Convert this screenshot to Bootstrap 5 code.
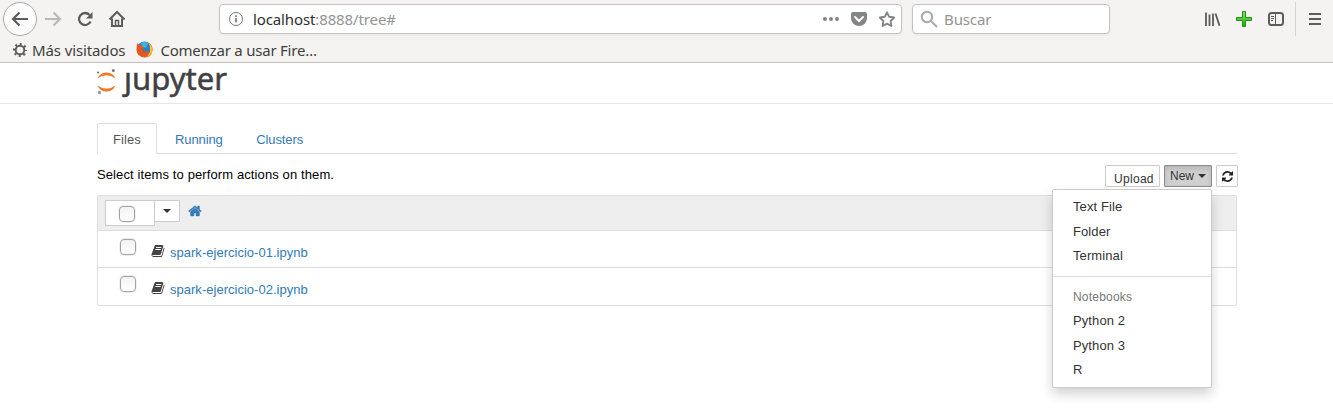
<!DOCTYPE html>
<html lang="es">
<head>
<meta charset="utf-8">
<title>Home</title>
<link href="https://cdn.jsdelivr.net/npm/bootstrap@5.3.0/dist/css/bootstrap.min.css" rel="stylesheet">
<style>
body{font:13px/18.57px "Liberation Sans",Arial,sans-serif;color:#000;background:#fff;min-height:100vh}
svg{display:block;flex:none}
.chrome{height:63px;background:#f4f3f1;border-bottom:1px solid #c3c1be;font:15px/20px "Noto Sans",sans-serif;letter-spacing:-.12px;color:#3f3f3f}
.toolbar-row{height:38px}
.field{height:30px;background:#fff;border:1px solid #c6c4c1;border-radius:4px;box-shadow:0 1px 3px #0000000d}
.address{width:683px;margin-left:93px;padding-left:9px;padding-right:6px}
.address .host{color:#2e2e2e}
.address .rest{color:#949494}
.searchbox{width:198px;margin-left:10px;padding-left:7px;color:#949494}
.bookmarks{height:23px;padding-left:12px}
.toolsep{width:1px;height:34px;background:#d5d3d0}
.logo-bar{height:41px;border-bottom:1px solid #e7e7e7}
.page{width:1141px;margin-left:97px}
.nav-tabs{margin-top:19px;height:31px;--bs-nav-tabs-border-color:#ddd;width:1140px}
.nav-tabs .nav-link{padding:6px 15px 5px;height:31px;line-height:20px;color:#337ab7;border-radius:2px 2px 0 0;margin-right:1.500px;letter-spacing:-.1px}
.nav-tabs .nav-link.active{color:#555;border-color:#ddd #ddd #fff;width:60px;margin-right:2px;letter-spacing:.1px}
.actions{height:41px;padding-top:11px}
.hint{margin-top:1px;letter-spacing:.11px}
.tool{height:22px;border:1px solid #ccc;border-radius:1px;background:#fff;color:#333;font-size:12px;line-height:18px;padding:0}
.upload{width:55px;padding:5px 0 0 8px;height:22px;line-height:16px;letter-spacing:.3px;white-space:nowrap}
.newbtn{width:48px;background:#d0d0d0;border-color:#8c8c8c;box-shadow:inset 0 3px 5px #00000020}
.caret{border:4px solid transparent;border-top-color:currentColor;border-bottom:0}
.menu{top:24px;right:0;left:auto;width:160px;padding:5px 0 4px;margin:0;font-size:13px;border:1px solid #ccc;border-radius:2px;box-shadow:0 6px 12px #0000002d}
.menu .dropdown-item{padding:3px 20px;line-height:18.5px;color:#333;letter-spacing:.1px}
.menu .dropdown-divider{margin:7.500px 0 9px;border-color:#e0e0e0;opacity:1}
.menu .dropdown-header{padding:3px 20px;font-size:12px;line-height:17.14px;color:#777;letter-spacing:.2px}
.listing{width:1140px;border:1px solid #ddd;border-radius:2px}
.list-head{height:34px;background:#eee;padding:4px 7px}
.selector{width:50px;height:26px;border:1px solid #ccc;background:#fff;padding:5px 0 0 13px}
.dropper{width:26px;height:22px;border:1px solid #ccc;background:#fff;color:#333;margin-left:-1px}
.tick{appearance:none;display:block;width:16px;height:16px;margin:0;border:1px solid #a2a2a2;border-radius:4px;background:linear-gradient(#f2f2f2,#fff);box-shadow:0 0 0 .4px #ddd}
.item-row{height:37px;border-top:1px solid #ddd;padding-left:22px}
.item-row + .item-row{height:38px}
.item-row a{color:#337ab7;text-decoration:none;margin:13px 0 0 4px;letter-spacing:.02px}
</style>
</head>
<body>
<header class="chrome">
  <div class="toolbar-row d-flex align-items-center">
    <svg width="126" height="38" fill="none" stroke="#5c5c5c" stroke-width="2">
      <circle cx="20" cy="19" r="16.5" fill="#fcfcfc" stroke="#aaa" stroke-width="1"/>
      <path d="M13 19H28M19.500 12.500L13 19l6.500 6.500" stroke-width="2.200"/>
      <path d="M45 19H60M53.500 12.500L60 19l-6.500 6.500" stroke="#b9b9b9" stroke-width="2.200"/>
      <path d="M90.500 21.500A6 6 0 1 1 89.500 15" stroke-width="2.300"/><path d="M92.500 12v6.500H86z" fill="#5c5c5c" stroke="none"/>
      <path d="M109.500 19.500L117 12l7.500 7.500M112 18.500V26h10v-7.500"/><path d="M115.500 26v-5.500h3V26" stroke-width="1.500"/>
    </svg>
    <div class="field address d-flex align-items-center">
      <svg width="16" height="16" fill="none" stroke="#777"><circle cx="7" cy="8" r="6.500"/><path d="M7 7v4.500M7 4.300v1.600" stroke-width="1.600"/></svg>
      <span style="margin-left:8px"><span class="host">localhost</span><span class="rest">:8888/tree#</span></span>
      <svg class="ms-auto" width="73" height="18" fill="#858585">
        <circle cx="3" cy="9" r="2"/><circle cx="9" cy="9" r="2"/><circle cx="15" cy="9" r="2"/>
        <path d="M31 2h12q2 0 2 2v4a8 8 0 0 1-16 0V4q0-2 2-2z"/><path d="M33 7l4 4 4-4" fill="none" stroke="#fff" stroke-width="2" stroke-linecap="round"/>
        <path d="M65 2.300l2.200 4.500 5 .7-3.600 3.500.8 5-4.400-2.400-4.400 2.400.8-5-3.600-3.500 5-.7z" fill="none" stroke="#858585" stroke-width="1.900" stroke-linejoin="round"/>
      </svg>
    </div>
    <div class="field searchbox d-flex align-items-center">
      <svg width="18" height="18" fill="none" stroke="#aaa" stroke-width="2"><circle cx="7" cy="7" r="5.200"/><path d="M11 11l6 6"/></svg>
      <span style="margin-left:6px">Buscar</span>
    </div>
    <svg width="80" height="18" style="margin-left:95px">
      <path d="M1 2.500V16M4.500 4.500V16M8 3.500V16M10.500 3.500l4 12.300" stroke="#5c5c5c" stroke-width="1.800" fill="none"/>
      <defs><linearGradient id="g" x2="0" y2="1"><stop stop-color="#84e563"/><stop offset="1" stop-color="#22a80f"/></linearGradient></defs>
      <path d="M37.500 1.500h3v6h6v3h-6v6h-3v-6h-6v-3h6z" fill="url(#g)" stroke="#229216"/>
      <rect x="64" y="3" width="14" height="12" rx="2.500" fill="none" stroke="#5c5c5c" stroke-width="2"/><path d="M70.500 3v12" stroke="#5c5c5c"/><path d="M66 6.500h3M66 8.500h3M66 10.500h2" stroke="#5c5c5c"/>
    </svg>
    <div class="toolsep" style="margin-left:10px"></div>
    <svg width="12" height="14" style="margin-left:13px" stroke="#5c5c5c" stroke-width="2"><path d="M0 2h12M0 7h12M0 12h12"/></svg>
  </div>
  <div class="bookmarks d-flex align-items-center">
    <svg width="16" height="16" fill="none" stroke="#5c5c5c"><circle cx="8" cy="8" r="4.300" stroke-width="1.900"/><circle cx="8" cy="8" r="6" stroke-width="2.200" stroke-dasharray="2 2.712" stroke-dashoffset="1"/></svg>
    <span style="margin-left:4px">Más visitados</span>
    <svg width="17" height="17" viewBox="0 0 17 17" style="margin-left:11px">
      <circle cx="8.500" cy="8" r="7.500" fill="#2584c7"/><path d="M5 2q4-2 7 0l-2 5-4-1z" fill="#3db4e8"/>
      <path d="M1.500 2q1 1.500 2.500 1.500l2 2 2.500.5q0 1.500-2 2 0 3 3.500 2.500 2-.8 3-.3-1 2-3 2.300 5-.5 4-6.500 0-3-2.500-4.500 5.500 2 5 8Q15.500 16.500 8.500 16.500 1 16 .5 9 .2 5 1.500 2z" fill="#e4571c"/>
      <path d="M12.500 2q4 3 3.800 7-.5 6-6.300 7 5-3.500 4-8 0-3.500-1.500-6z" fill="#fbc02d"/>
    </svg>
    <span style="margin-left:7px;letter-spacing:-.22px">Comenzar a usar Fire…</span>
  </div>
</header>
<div class="logo-bar">
  <svg width="240" height="40" role="img">
    <text x="124" y="26.500" font-family="Noto Sans,sans-serif" font-size="31.500" fill="#414042" stroke="#414042" stroke-width=".5" textLength="103" lengthAdjust="spacingAndGlyphs">jupyter</text>
    <path d="M119 0h13v9h-13z" fill="#fff"/>
    <path d="M97.500 15.500a9.700 9.700 0 0 1 18 0q-9-6.500-18 0zM97.500 22.500a9.700 9.700 0 0 0 18 0q-9 6.500-18 0z" fill="#f37726"/>
    <circle cx="98" cy="9.500" r="1" fill="#616262"/><circle cx="113.300" cy="7.500" r="1.500" fill="#767677"/><circle cx="99.500" cy="29.500" r="1.700" fill="#989798"/>
  </svg>
</div>
<main class="page">
  <ul class="nav nav-tabs">
    <li class="nav-item"><a class="nav-link active" href="#">Files</a></li>
    <li class="nav-item"><a class="nav-link" href="#">Running</a></li>
    <li class="nav-item"><a class="nav-link" href="#">Clusters</a></li>
  </ul>
  <div class="actions d-flex align-items-start">
    <span class="hint">Select items to perform actions on them.</span>
    <div class="ms-auto d-flex" style="gap:4px">
      <div class="tool upload">Upload</div>
      <div class="position-relative">
        <button class="tool newbtn d-flex align-items-center justify-content-center">New<span class="caret" style="margin-left:4px"></span></button>
        <ul class="dropdown-menu menu show">
          <li><a class="dropdown-item" href="#">Text File</a></li>
          <li><a class="dropdown-item" href="#">Folder</a></li>
          <li><a class="dropdown-item" href="#">Terminal</a></li>
          <li><hr class="dropdown-divider"></li>
          <li class="dropdown-header">Notebooks</li>
          <li><a class="dropdown-item" href="#">Python 2</a></li>
          <li><a class="dropdown-item" href="#">Python 3</a></li>
          <li><a class="dropdown-item" href="#">R</a></li>
        </ul>
      </div>
      <button class="tool d-flex align-items-center justify-content-center" style="width:22px" aria-label="Refresh">
        <svg width="11" height="11" viewBox="128 128 1536 1536" fill="#222"><path d="M1639 1056q0 5-1 7-64 268-268 434.500t-478 166.500q-146 0-282.500-55t-243.500-157l-129 129q-19 19-45 19t-45-19-19-45v-448q0-26 19-45t45-19h448q26 0 45 19t19 45-19 45l-137 137q71 66 161 102t187 36q134 0 250-65t186-179q11-17 53-117 8-23 30-23h192q13 0 22.500 9.500t9.500 22.500zm25-800v448q0 26-19 45t-45 19h-448q-26 0-45-19t-19-45 19-45l138-138q-148-137-349-137-134 0-250 65t-186 179q-11 17-53 117-8 23-30 23h-199q-13 0-22.500-9.500t-9.500-22.500v-7q65-268 270-434.500t480-166.500q146 0 284 55.500t245 156.500l130-129q19-19 45-19t45 19 19 45z"/></svg>
      </button>
    </div>
  </div>
  <section class="listing">
    <div class="list-head d-flex align-items-start">
      <div class="selector"><input type="checkbox" class="tick" aria-label="Select all"></div>
      <div class="dropper d-flex align-items-center justify-content-center"><span class="caret"></span></div>
      <svg width="14" height="14" viewBox="0 0 1792 1792" fill="#337ab7" stroke="#337ab7" stroke-width="50" style="margin:4px 0 0 8px"><path d="M1472 992v480q0 26-19 45t-45 19h-384v-384h-256v384h-384q-26 0-45-19t-19-45v-480q0-1 .5-3t.5-3l575-474 575 474q1 2 1 6zm223-69l-62 74q-8 9-21 11h-3q-13 0-21-7l-692-577-692 577q-12 8-24 7-13-2-21-11l-62-74q-8-10-7-23.500t11-21.500l719-599q32-26 76-26t76 26l244 204v-195q0-14 9-23t23-9h192q14 0 23 9t9 23v408l219 182q10 8 11 21.500t-7 23.500z"/></svg>
    </div>
    <svg width="0" height="0" class="d-none"><symbol id="book" viewBox="0 0 1792 1792"><path d="M1639 478q40 57 18 129l-275 906q-19 64-76.500 107.500t-122.500 43.500h-923q-77 0-148.500-53.500t-99.500-131.500q-24-67-2-127 0-4 3-27t4-37q1-8-3-21.500t-3-19.500q2-11 8-21t16.500-23.500 16.500-23.500q23-38 45-91.500t30-91.500q3-10 .5-30t-.5-28q3-11 17-28t17-23q21-36 42-92t25-90q1-9-2.500-32t.5-28q4-13 22-30.500t22-22.500q19-26 42.500-84.500t27.500-96.500q1-8-3-25.500t-2-26.500q2-8 9-18t18-23 17-21q8-12 16.500-30.500t15-35 16-36 19.500-32 26.500-23.500 36-11.500 47.500 5.500l-1 3q38-9 51-9h761q74 0 114 56t18 130l-274 906q-36 119-71.500 153.500t-128.500 34.500h-869q-27 0-38 15-11 16-1 43 24 70 144 70h923q29 0 56-15.500t35-41.500l300-987q7-22 5-57 38 15 59 43zm-1064 2q-4 13 2 22.500t20 9.500h608q13 0 25.500-9.500t16.500-22.500l21-64q4-13-2-22.500t-20-9.500h-608q-13 0-25.500 9.500t-16.500 22.500zm-83 256q-4 13 2 22.500t20 9.500h608q13 0 25.500-9.500t16.500-22.500l21-64q4-13-2-22.500t-20-9.500h-608q-13 0-25.500 9.500t-16.500 22.500z"/></symbol></svg>
    <div class="item-row d-flex align-items-start">
      <input type="checkbox" class="tick" style="margin-top:8px" aria-label="Select">
      <svg width="15" height="14" fill="#444" style="margin:13px 0 0 15px"><use href="#book"/></svg>
      <a href="#">spark-ejercicio-01.ipynb</a>
    </div>
    <div class="item-row d-flex align-items-start">
      <input type="checkbox" class="tick" style="margin-top:8px" aria-label="Select">
      <svg width="15" height="14" fill="#444" style="margin:13px 0 0 15px"><use href="#book"/></svg>
      <a href="#">spark-ejercicio-02.ipynb</a>
    </div>
  </section>
</main>
<script src="https://cdn.jsdelivr.net/npm/bootstrap@5.3.0/dist/js/bootstrap.bundle.min.js"></script>
</body>
</html>
